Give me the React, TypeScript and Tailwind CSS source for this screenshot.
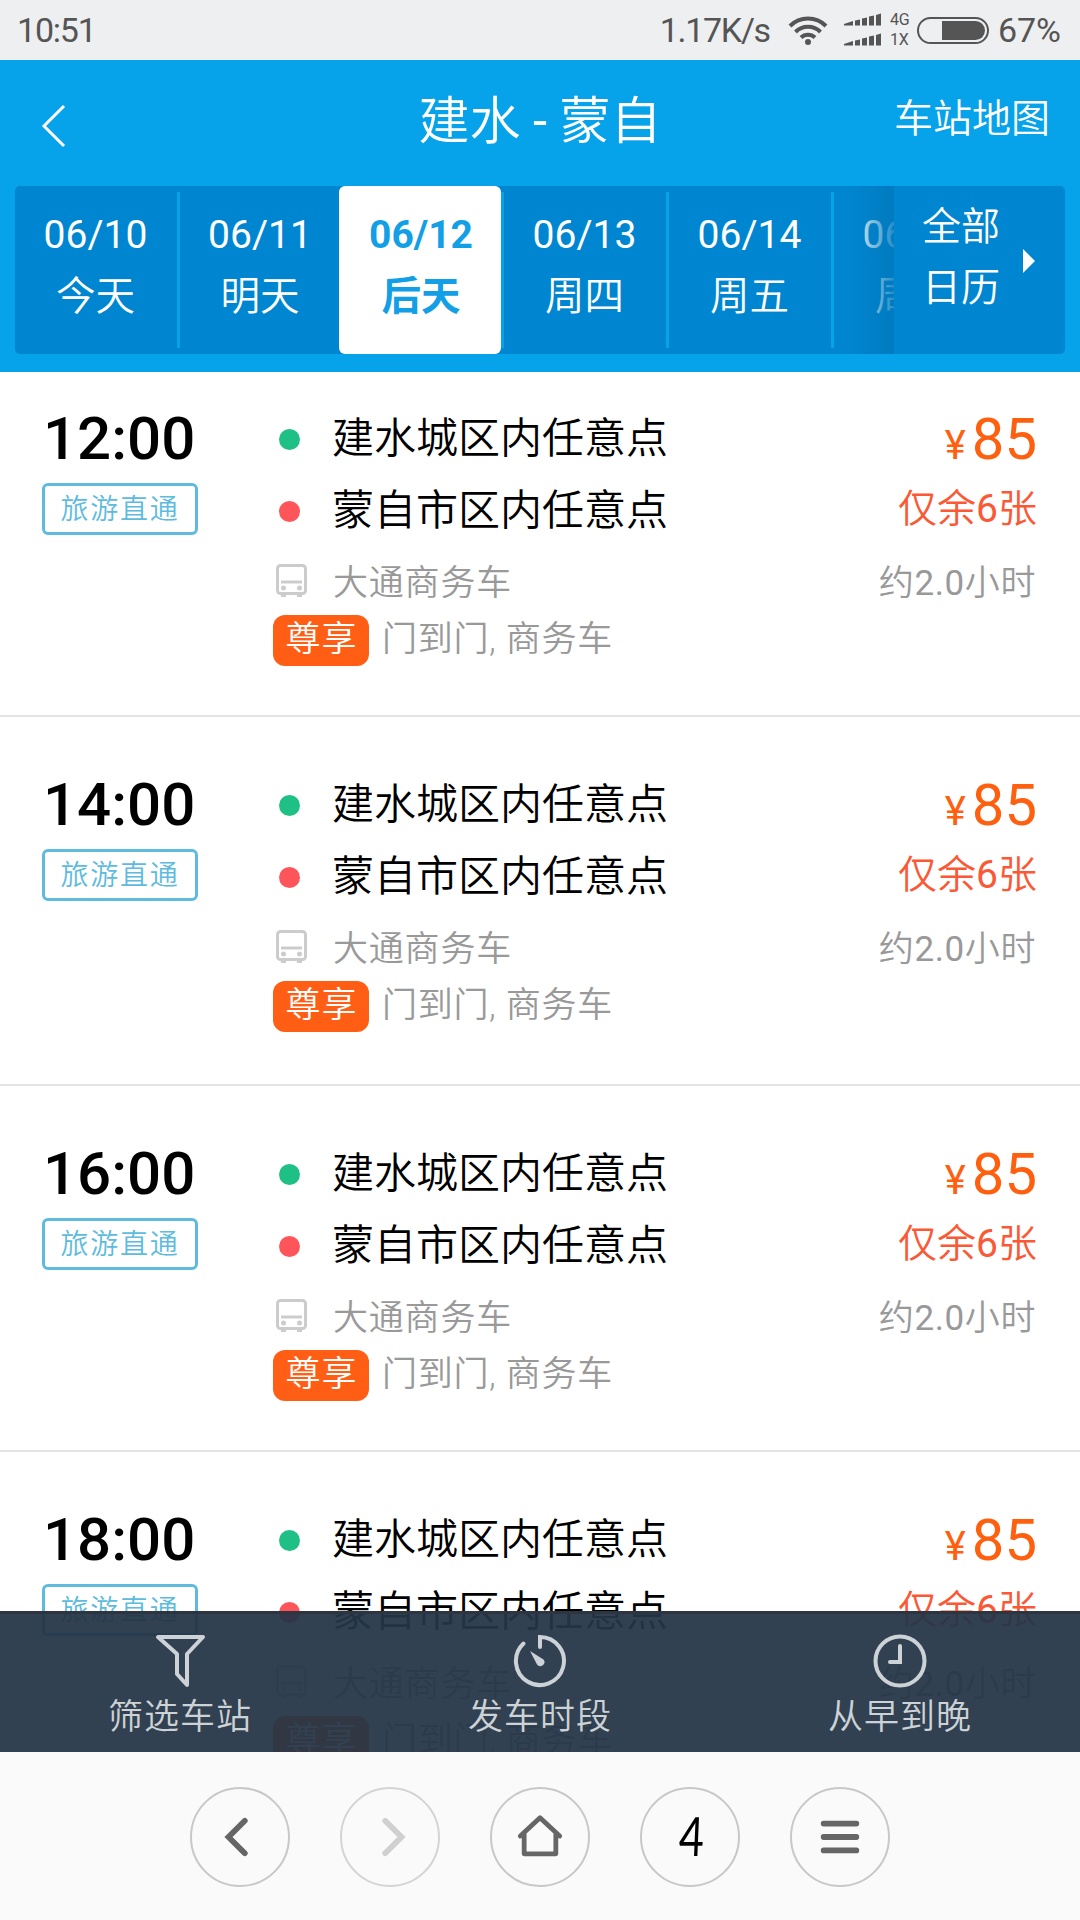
import React from 'react';

const days = [
  { date: '06/10', label: '今天', width: 'w-[165px]' },
  { date: '06/11', label: '明天', width: 'w-[164px]' },
  { date: '06/12', label: '后天', width: 'w-[160px]', active: true },
  { date: '06/13', label: '周四', width: 'w-[165px]' },
  { date: '06/14', label: '周五', width: 'w-[165px]' },
  { date: '06/15', label: '周六', width: 'w-[165px]' },
];

const trips = [
  { time: '12:00', height: 'h-[345px]', pad: 'pt-[34px]' },
  { time: '14:00', height: 'h-[369px]', pad: 'pt-[55px]' },
  { time: '16:00', height: 'h-[366px]', pad: 'pt-[55px]' },
  { time: '18:00', height: 'h-[367px]', pad: 'pt-[55px]' },
];

const StatusBar: React.FC = () => (
  <div className="flex h-[60px] items-center bg-[#eeeff1] pl-[17px] pr-[19px] text-[34px] text-[#555]">
    <span className="tracking-[-1.2px]">10:51</span>
    <span className="ml-auto tracking-[-1.3px]">1.17K/s</span>
    <svg className="ml-[18px]" width="40" height="32" viewBox="0 0 40 32" fill="none" stroke="#555" strokeWidth="4">
      <path d="M2 12a25.500 25.500 0 0 1 36 0" />
      <path d="M7.500 18a17.500 17.500 0 0 1 25 0" />
      <path d="M13 23.500a10 10 0 0 1 14 0" />
      <circle cx="20" cy="28" r="3" fill="#555" stroke="none" />
    </svg>
    <svg className="ml-[16px]" width="38" height="34" viewBox="0 0 38 34" fill="#555">
      <path d="M0 11l9-3V12.500H0zM11 7.500l5-1V12.500h-5zM18 5.500l5-1V12.500h-5zM25 3.500l5-1V12.500h-5zM32 2l5-1.500V12.500h-5z" />
      <path d="M0 31l9-3V32.500H0zM11 27.500l5-1V32.500h-5zM18 25.500l5-1V32.500h-5zM25 23.500l5-1V32.500h-5zM32 22l5-1.500V32.500h-5z" />
    </svg>
    <div className="ml-[8px] flex w-[24px] flex-col text-[16px] leading-[20px]">
      <span>4G</span>
      <span>1X</span>
    </div>
    <div className="ml-[3px] flex h-[27px] w-[72px] justify-end rounded-full border-2 border-[#555] p-[2px]">
      <div className="w-[43px] rounded-r-full bg-[#555]" />
    </div>
    <span className="ml-[9px]">67%</span>
  </div>
);

const Header: React.FC = () => (
  <header className="h-[312px] bg-[#06a2ea] px-[15px] text-white">
    <div className="grid h-[126px] grid-cols-3 items-center">
      <svg className="ml-[26px] mt-[6px]" width="26" height="44" viewBox="0 0 26 44" fill="none" stroke="#fff" strokeWidth="3">
        <path d="M23 2L3 22l20 20" />
      </svg>
      <h1 className="-mx-4 pb-[2px] text-center text-[51px] font-[350] whitespace-nowrap">
        建水 <span className="font-normal">-</span> 蒙自
      </h1>
      <span className="pr-[15px] pb-[8px] text-right text-[39px] font-[350]">车站地图</span>
    </div>
    <div className="flex h-[168px] overflow-hidden rounded-[5px] bg-[#0086d0]">
      <div className="relative flex w-[879px] overflow-hidden">
        {days.map((day) => (
          <div key={day.date} className={`my-[6px] shrink-0 border-r-[3px] border-[#06a2ea] ${day.width}`}>
            <div
              className={
                day.active
                  ? 'relative -my-[6px] -ml-[5px] flex h-[168px] flex-col items-center rounded-[6px] bg-white pt-[19px] pl-[2px] font-bold text-[#129fe6]'
                  : 'flex flex-col items-center pt-[13px] pr-px font-[350]'
              }
            >
              <span className={`text-[39px] leading-[61px] ${day.active ? '' : 'font-normal'}`}>{day.date}</span>
              <span className="text-[39.5px] leading-[61px]">{day.label}</span>
            </div>
          </div>
        ))}
        {/* fade under the calendar button */}
        <div className="absolute inset-y-0 right-0 w-[48px] bg-linear-to-r from-[#0086d0]/0 to-[#0079bd]/85" />
      </div>
      <div className="flex flex-1 items-center pl-[28px]">
        <div className="w-[80px] pb-[25px] text-[39px] leading-[61px] font-[350]">全部 日历</div>
        <svg className="ml-[21px] mb-[18px]" width="12" height="24" viewBox="0 0 12 24" fill="#fff">
          <path d="M0 0l12 12L0 24z" />
        </svg>
      </div>
    </div>
  </header>
);

const BusIcon: React.FC = () => (
  <svg width="32" height="34" viewBox="0 0 32 34" fill="none" stroke="#ccc" strokeWidth="3">
    <rect x="1.500" y="1.500" width="28" height="28" rx="3" />
    <path d="M5 18h21" />
    <circle cx="7.500" cy="24" r="2.500" fill="#ccc" stroke="none" />
    <circle cx="23.500" cy="24" r="2.500" fill="#ccc" stroke="none" />
    <path d="M5 31h5M21 31h5" strokeWidth="4" />
  </svg>
);

type TripProps = { time: string; height: string; pad: string };

const Trip: React.FC<TripProps> = ({ time, height, pad }) => (
  <div className={`flex shrink-0 border-b-2 border-[#e4e4e4] pl-[42px] pr-[43px] ${height} ${pad}`}>
    <div className="w-[231px]">
      <div className="pt-px pl-px text-[60px] leading-[64px] font-medium text-black">{time}</div>
      <div className="mt-[12px] flex h-[52px] w-[156px] items-center justify-center rounded-[6px] border-[3px] border-[#5ebbdd] pt-px text-[28px] font-[350] tracking-[1.700px] text-[#5ebbdd]">
        旅游直通
      </div>
    </div>
    <div className="flex-1">
      <div className="flex h-[64px] items-center">
        <span className="ml-[6px] mt-[2px] size-[21px] rounded-full bg-[#1fc085]" />
        <span className="ml-[32px] pt-px text-[42px] font-[350] text-black">建水城区内任意点</span>
      </div>
      <div className="mt-[8px] flex h-[64px] items-center">
        <span className="ml-[6px] mt-[2px] size-[21px] rounded-full bg-[#fd5559]" />
        <span className="ml-[32px] pt-px text-[42px] font-[350] text-black">蒙自市区内任意点</span>
      </div>
      <div className="mt-[7px] flex h-[64px] items-center">
        <span className="ml-[3px]">
          <BusIcon />
        </span>
        <span className="ml-[25px] pt-[6px] text-[35px] font-[350] tracking-[0.800px] text-[#999]">大通商务车</span>
      </div>
      <div className="mt-[2px] flex h-[51px] items-center">
        <span className="flex h-[51px] w-[96px] items-center justify-center rounded-[12px] bg-[#ff5e14] pl-px text-[35px] font-[350] tracking-[1px] text-white">
          尊享
        </span>
        <span className="ml-[13px] text-[35px] font-[350] tracking-[0.700px] text-[#999]">门到门, 商务车</span>
      </div>
    </div>
    <div className="flex w-[200px] flex-col items-end whitespace-nowrap">
      <div className="flex h-[64px] items-baseline pt-px text-[#fe6010]">
        <span className="mr-[6px] text-[40px]">¥</span>
        <span className="text-[58px] leading-[64px]">85</span>
      </div>
      <div className="mt-[7px] text-[39px] leading-[64px] font-[350] text-[#fb5836]">
        仅余<span className="font-normal">6</span>张
      </div>
      <div className="mt-[11px] pr-px text-[35px] leading-[64px] font-[350] tracking-[0.600px] text-[#999]">
        约<span className="font-normal">2.0</span>小时
      </div>
    </div>
  </div>
);

const FilterBar: React.FC = () => (
  <div className="absolute inset-x-0 bottom-0 grid h-[141px] grid-cols-3 border-t-[3px] border-[#2d3540] bg-[#243546]/94 text-[#cdd2d6]">
    <div className="flex flex-col items-center pt-[20px]">
      <svg width="52" height="54" viewBox="0 0 52 54" fill="none" stroke="currentColor" strokeWidth="4" strokeLinejoin="round">
        <path d="M4 3h45L33 20v31l-10-11V20z" />
      </svg>
      <span className="mt-[4px] text-[35px] leading-[52px] font-[350] tracking-[1px]">筛选车站</span>
    </div>
    <div className="flex flex-col items-center pt-[20px]">
      <svg width="54" height="54" viewBox="0 0 54 54" fill="none" stroke="currentColor" strokeWidth="4" strokeLinecap="round">
        <path d="M27 13V3a24 24 0 1 1-16.500 6.500" />
        <path d="M17 17l13.500 8.500a4 4 0 0 1-6.500 5z" fill="currentColor" stroke="none" />
      </svg>
      <span className="mt-[4px] text-[35px] leading-[52px] font-[350] tracking-[1px]">发车时段</span>
    </div>
    <div className="flex flex-col items-center pt-[20px]">
      <svg width="54" height="54" viewBox="0 0 54 54" fill="none" stroke="currentColor" strokeWidth="4" strokeLinecap="round">
        <circle cx="27" cy="27" r="24.500" />
        <path d="M27 12v16H17" />
      </svg>
      <span className="mt-[4px] text-[35px] leading-[52px] font-[350] tracking-[1px]">从早到晚</span>
    </div>
  </div>
);

const circle = 'flex size-[100px] items-center justify-center rounded-full border-2 border-[#c8c8c8]';

const BrowserBar: React.FC = () => (
  <nav className="flex h-[168px] justify-center gap-[50px] bg-[#fafafa] pt-[35px] text-[#666]">
    <button className={circle}>
      <svg width="100" height="100" viewBox="0 0 100 100" fill="none" stroke="currentColor" strokeWidth="6" strokeLinecap="round">
        <path d="M55 33L38 50l17 17" />
      </svg>
    </button>
    <button className="flex size-[100px] items-center justify-center rounded-full border-2 border-[#d4d4d4] text-[#d0d0d0]">
      <svg width="100" height="100" viewBox="0 0 100 100" fill="none" stroke="currentColor" strokeWidth="6" strokeLinecap="round">
        <path d="M45 33l17 17-17 17" />
      </svg>
    </button>
    <button className={circle}>
      <svg width="100" height="100" viewBox="0 0 100 100" fill="none" stroke="currentColor" strokeWidth="5" strokeLinecap="round">
        <path d="M29.500 49L50 30l20.500 19M33.500 47v20.500h33V47" strokeLinejoin="round" />
      </svg>
    </button>
    <button className={`${circle} font-[Lato] text-[54px] text-black`}>
      <span className="mb-[3px] ml-[3px] inline-block scale-x-80 -skew-x-3">4</span>
    </button>
    <button className={circle}>
      <svg width="100" height="100" viewBox="0 0 100 100" fill="none" stroke="currentColor" strokeWidth="6" strokeLinecap="round">
        <path d="M33 36h34M33 50h34M33 64h34" />
      </svg>
    </button>
  </nav>
);

export default function App() {
  return (
    <div className="flex h-[1920px] w-[1080px] flex-col overflow-hidden bg-white font-[Roboto,'Noto_Sans_CJK_SC',sans-serif]">
      <StatusBar />
      <Header />
      <main className="relative flex h-[1380px] flex-col overflow-hidden bg-white">
        {trips.map((trip) => (
          <Trip key={trip.time} {...trip} />
        ))}
        <FilterBar />
      </main>
      <BrowserBar />
    </div>
  );
}
